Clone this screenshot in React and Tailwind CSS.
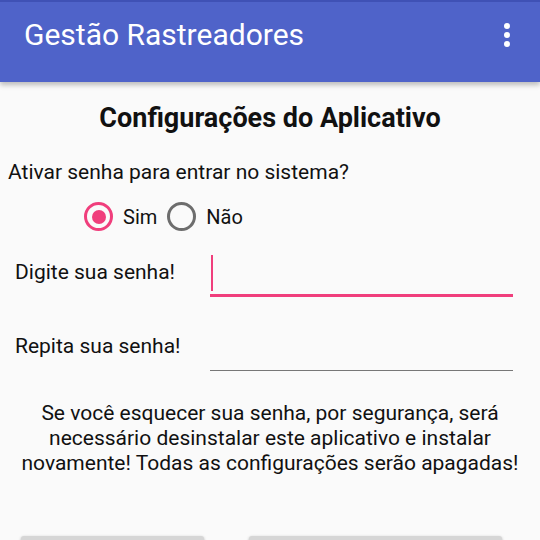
import { useState } from 'react';

const font = { fontFamily: 'Roboto, "Noto Sans", sans-serif' };

const Radio = ({ checked, label, onClick }) => (
  <button onClick={onClick} className="flex items-center gap-[10px]">
    <span
      className={`w-[29px] h-[29px] rounded-full border-[3px] flex items-center justify-center ${
        checked ? 'border-[#f03e7c]' : 'border-[#6d6d6d]'
      }`}
    >
      {checked && <span className="w-[14px] h-[14px] rounded-full bg-[#f03e7c]" />}
    </span>
    <span className="text-[20px] leading-[24px] text-[#111]">{label}</span>
  </button>
);

export default function App() {
  const [ativo, setAtivo] = useState(true);

  return (
    <div className="w-[540px] h-[540px] overflow-hidden bg-[#fafafa] flex flex-col" style={font}>
      {/* app bar */}
      <header className="h-[82px] shrink-0 bg-[#4f63c9] border-t-2 border-[#3f51b5] flex items-center justify-between pl-6 pr-[30px] shadow-[0_3px_5px_rgba(0,0,0,0.25)] relative z-10">
        <h1 className="text-[30px] leading-[36px] text-white -mt-[14px]">Gestão Rastreadores</h1>
        <div className="flex flex-col gap-[3px] -mt-[14px]">
          <span className="w-[6px] h-[6px] rounded-full bg-white" />
          <span className="w-[6px] h-[6px] rounded-full bg-white" />
          <span className="w-[6px] h-[6px] rounded-full bg-white" />
        </div>
      </header>

      <main className="flex flex-col">
        <h2 className="text-center text-[27px] leading-[32px] font-bold text-[#111] mt-[20px]">Configurações do Aplicativo</h2>

        <p className="text-[21px] leading-[26px] text-[#111] pl-2 mt-[25px]">Ativar senha para entrar no sistema?</p>

        <div className="flex items-center gap-[10px] pl-[84px] mt-[17px]">
          <Radio checked={ativo} label="Sim" onClick={() => setAtivo(true)} />
          <Radio checked={!ativo} label="Não" onClick={() => setAtivo(false)} />
        </div>

        <div className="flex items-start mt-[18px]">
          <label className="w-[210px] pl-[15px] pt-[10px] text-[21px] leading-[26px] text-[#111]">Digite sua senha!</label>
          <div className="w-[303px] h-[48px] border-b-[3px] border-[#f03e7c] relative">
            <span className="absolute left-[1px] top-[6px] w-[2px] h-[36px] bg-[#f03e7c]" />
          </div>
        </div>

        <div className="flex items-start mt-[32px]">
          <label className="w-[210px] pl-[15px] pt-[4px] text-[21px] leading-[26px] text-[#111]">Repita sua senha!</label>
          <div className="w-[303px] h-[42px] border-b-[1.5px] border-[#777]" />
        </div>

        <p className="text-center text-[21px] leading-[25px] text-[#111] px-2 mt-[30px]">
          Se você esquecer sua senha, por segurança, será<br />
          necessário desinstalar este aplicativo e instalar<br />
          novamente! Todas as configurações serão apagadas!
        </p>

        <div className="flex justify-between pl-[21px] pr-[38px] mt-[60px]">
          <button className="w-[183px] h-[40px] rounded-[3px] bg-[#d6d6d6] shadow-[0_1px_3px_rgba(0,0,0,0.3)]" />
          <button className="w-[253px] h-[40px] rounded-[3px] bg-[#d6d6d6] shadow-[0_1px_3px_rgba(0,0,0,0.3)]" />
        </div>
      </main>
    </div>
  );
}
